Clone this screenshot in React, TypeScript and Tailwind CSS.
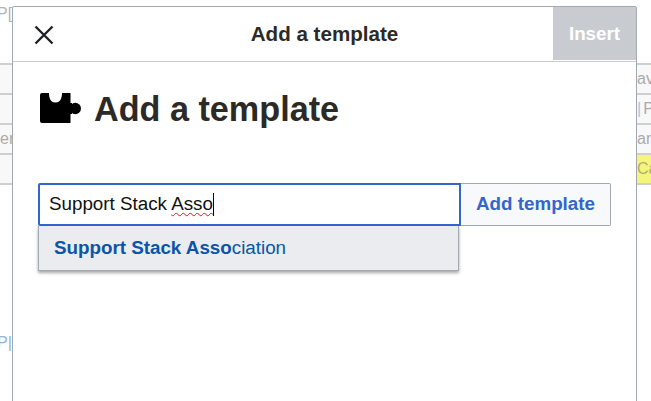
import React from "react";

const font = { fontFamily: '"Liberation Sans", Arial, sans-serif' };

function BgRows({ side }: { side: "l" | "r" }) {
  const rows: React.ReactNode[] =
    side === "l"
      ? ["", "", "er", "", ""]
      : [
          "av",
          <>
            <span className="text-[#a9c4e6]">|</span>
            <span className="ml-[2px]">P</span>
          </>,
          "an",
          "Ca",
          "",
        ];
  return (
    <div className="flex flex-col pt-[63px] text-[16px] leading-[20px] text-[#ababab]">
      {rows.map((t, i) => (
        <div
          key={i}
          className={`h-[30px] flex items-center border-t-2 border-[#cfcfcf] overflow-hidden whitespace-nowrap ${
            i === 3 && side === "r" ? "bg-[#f5f57e] text-[#b0b070]" : "bg-[#f8f8f8]"
          } ${i === 4 ? "bg-white" : ""} ${i === 4 && side === "r" ? "border-t-0" : ""}`}
        >
          {t}
        </div>
      ))}
    </div>
  );
}

export default function App() {
  return (
    <div
      className="relative w-[651px] h-[401px] overflow-hidden bg-white flex justify-between"
      style={font}
    >
      <div className="w-[12px] overflow-hidden relative">
        <div className="absolute left-[-3px] top-[4px] text-[16px] leading-[20px] text-[#b5b5b5]">P[</div>
        <BgRows side="l" />
        <div className="absolute left-[-3px] top-[333px] text-[16px] leading-[20px] text-[#8fb4e0]">P|</div>
      </div>
      <div className="w-[14px] overflow-hidden">
        <BgRows side="r" />
      </div>

      <div className="absolute left-[12px] top-[6px] w-[625px] h-[400px] bg-white border border-[#a2a9b1] rounded-[2px] flex flex-col text-[#202122]">
        <div className="h-[55px] flex items-stretch justify-between border-b border-[#c8ccd1] shrink-0">
          <div className="w-[83px] flex items-center pl-[21px] pt-[1px]">
            <button className="block">
              <svg width="20" height="20" viewBox="0 0 20 20" className="block">
                <path d="M1.500 1.500 L18.500 18.500 M18.500 1.500 L1.500 18.500" stroke="#202122" strokeWidth="2.4" fill="none" />
              </svg>
            </button>
          </div>
          <div className="flex-1 flex items-center justify-center text-[20.6px] font-bold text-[#2c2a26]">
            Add a template
          </div>
          <div className="w-[83px] h-[53px] pt-[1px] bg-[#c8ccd1] text-white text-[18.8px] font-bold flex items-center justify-center">
            Insert
          </div>
        </div>

        <div className="pl-[25px] pr-[25px] flex flex-col">
          <div className="flex items-center h-[40px] mt-[27px] gap-[13px] pl-[2px]">
            <svg width="41" height="31" viewBox="0 0 41 31" className="shrink-0 -mt-[1px]">
              <path
                d="M2 0 H9 C9 3 9.500 9.500 15.500 9.500 C21.500 9.500 22 3 22 0 H30.500 V10 H32 V21 H30.500 V30 H2 Q0 30 0 28 V2 Q0 0 2 0 Z"
                fill="#000"
              />
              <circle cx="35.300" cy="15.500" r="5.700" fill="#000" />
            </svg>
            <h1 className="text-[34.200px] leading-[40px] font-bold text-[#2c2a26]">Add a template</h1>
          </div>

          <div className="flex mt-[54px] h-[43px] w-[573px] relative">
            <div className="w-[423px] h-[43px] border-2 border-[#3366cc] rounded-l-[2px] bg-white flex items-center pl-[9px] text-[18.8px] text-[#101010]">
              <span className="whitespace-pre">Support Stack </span>
              <span className="-ml-[1px] underline decoration-wavy decoration-[#e8141a] decoration-1 underline-offset-2">Asso</span>
              <span className="w-[1px] h-[23px] bg-black" />
            </div>
            <button className="flex-1 h-[43px] border border-l-0 border-[#a2a9b1] rounded-r-[2px] bg-[#f8f9fa] text-[#3366cc] text-[18.8px] font-bold flex items-center justify-center">
              Add template
            </button>
            <div className="absolute left-0 top-[43px] w-[421px] h-[45px] bg-[#eaecf0] border border-[#a2a9b1] border-t-0 shadow-[0_2px_3px_rgba(0,0,0,0.35)] flex items-center pl-[15px] text-[18.8px] text-[#0b55a8]">
              <span className="font-bold">Support Stack Asso</span>
              <span>ciation</span>
            </div>
          </div>
        </div>
      </div>
    </div>
  );
}
